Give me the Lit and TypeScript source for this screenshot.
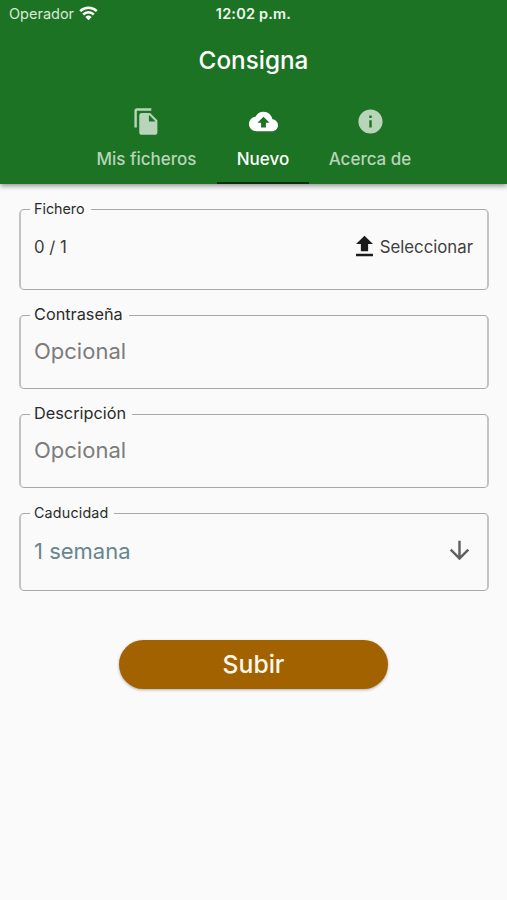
import { LitElement, html, css, svg } from "lit";
import { customElement, property } from "lit/decorators.js";

const ICONS: Record<string, string> = {
  copy: "M16 1H4c-1.1 0-2 .9-2 2v14h2V3h12V1zm-1 4l6 6v10c0 1.1-.9 2-2 2H7.99C6.89 23 6 22.1 6 21l.01-14c0-1.1.89-2 1.99-2h7zm-1 7h5.5L14 6.5V12z",
  cloud: "M19.35 10.04C18.67 6.59 15.64 4 12 4 9.11 4 6.6 5.64 5.35 8.04 2.34 8.36 0 10.91 0 14c0 3.31 2.69 6 6 6h13c2.76 0 5-2.24 5-5 0-2.64-2.05-4.78-4.65-4.96zM14 13v4h-4v-4H7l5-5 5 5h-3z",
  info: "M12 2C6.48 2 2 6.48 2 12s4.48 10 10 10 10-4.48 10-10S17.52 2 12 2zm1 15h-2v-6h2v6zm0-8h-2V7h2v2z",
  upload: "M9 16h6v-6h4l-7-7-7 7h4v6zm-4 2h14v2H5v-2z",
  down: "M20 12l-1.41-1.41L13 16.17V4h-2v12.17l-5.58-5.59L4 12l8 8 8-8z",
};

@customElement("app-icon")
class AppIcon extends LitElement {
  @property() name = "";
  static styles = css`
    :host { display: inline-flex; flex: none; width: 29px; height: 29px; }
    svg { width: 100%; height: 100%; fill: currentColor; }
  `;
  render() {
    return html`<svg viewBox="0 0 24 24">${svg`<path d=${ICONS[this.name]}></path>`}</svg>`;
  }
}

@customElement("form-field")
class FormField extends LitElement {
  @property() label = "";
  static styles = css`
    :host { display: block; }
    fieldset {
      box-sizing: border-box;
      height: 100%;
      min-width: 0;
      margin: 0;
      padding: 0 14px 0 9px;
      border-style: solid;
      border-width: 1px 2px;
      border-color: #a8a8a8 #c2c2c2;
      border-radius: 5px;
    }
    legend {
      height: 17px;
      line-height: 15px;
      padding: 0 6px 0 4px;
      font-size: var(--label-size, 16.3px);
      letter-spacing: var(--label-spacing, 0);
      color: #2b2b2b;
    }
    .body { display: flex; align-items: center; padding-left: 4px; height: var(--body-height, 54px); }
  `;
  render() {
    return html`<fieldset>
      <legend>${this.label}</legend>
      <div class="body"><slot></slot></div>
    </fieldset>`;
  }
}

@customElement("app-root")
class AppRoot extends LitElement {
  static styles = css`
    :host {
      display: flex;
      flex-direction: column;
      height: 900px;
      background: #fafafa;
      font-family: Inter, "Liberation Sans", sans-serif;
      overflow: hidden;
    }
    header { height: 184px; flex: none; display: flex; flex-direction: column; background: #1d7324; color: #fff; box-shadow: 0 2px 5px rgba(0, 0, 0, 0.42); }
    .status { display: grid; grid-template-columns: 1fr auto 1fr; height: 28px; align-items: center; padding: 0 9px; }
    .carrier { display: flex; align-items: center; gap: 5px; font-size: 14.5px; color: #d8ead6; }
    .carrier span { line-height: 16px; margin-top: -1px; }
    .wifi { width: 19px; height: 15px; margin-top: -2px; fill: none; stroke: #fff; stroke-width: 2.5; }
    .wifi .dot { fill: #fff; stroke: none; }
    .clock { line-height: 16px; margin-top: -1px; font-size: 14.5px; font-weight: 600; letter-spacing: 0.2px; color: #eef8ed; }
    h1 { margin: 0; height: 64px; line-height: 64px; text-align: center; font-size: 24.3px; font-weight: 500; }
    nav { display: flex; justify-content: center; flex: 1; }
    .tab { box-sizing: border-box; display: flex; flex-direction: column; align-items: center; padding: 15px 0 0; color: #b8d5b9; font-size: 17px; font-weight: 500; border-bottom: 2px solid transparent; }
    .tab span { line-height: 20px; margin-top: 13px; white-space: nowrap; }
    .t1 { width: 141px; }
    .t2 { width: 92px; }
    .t3 { width: 122px; }
    .active { color: #fff; border-bottom-color: #0b2e10; }
    main { display: flex; flex-direction: column; padding: 17px 18px 0 19px; }
    .file { height: 89px; --label-size: 14.3px; --body-height: 56px; }
    .text { height: 82px; margin-top: 17px; }
    .exp { height: 86px; margin-top: 17px; --label-size: 14.3px; --label-spacing: 0.18px; --body-height: 58px; }
    .count { padding-top: 2px; font-size: 16.8px; color: #3b3b3b; }
    .select { display: flex; align-items: center; gap: 1px; margin-left: auto; font-size: 16.8px; color: #404040; }
    .select span { padding-top: 2px; }
    .select app-icon { color: #1b1b1b; }
    .hint { font-size: 22px; color: #7c7c7c; }
    .value { font-size: 22px; color: #68868f; }
    .arrow { margin: -2px -1px 0 auto; color: #5f5f5f; }
    button { width: 269px; height: 49px; margin: 49px auto 0 100px; padding: 0 0 2px; border: 0; border-radius: 25px; background: #a36200; color: #fff8ea; font: 500 24.7px Inter, sans-serif; box-shadow: 0 1px 3px rgba(0, 0, 0, 0.3); }
  `;
  render() {
    return html`
      <header>
        <div class="status">
          <div class="carrier">
            <span>Operador</span>
            <svg class="wifi" viewBox="0 0 19 15">
              <path d="M1.2 5.2a12 12 0 0 1 16.6 0M4.2 8.5a7.6 7.6 0 0 1 10.6 0"></path>
              <path class="dot" d="M9.5 14.2 6.4 11a4.5 4.5 0 0 1 6.2 0z"></path>
            </svg>
          </div>
          <div class="clock">12:02 p.m.</div>
        </div>
        <h1>Consigna</h1>
        <nav>
          <div class="tab t1"><app-icon name="copy"></app-icon><span>Mis ficheros</span></div>
          <div class="tab t2 active"><app-icon name="cloud"></app-icon><span>Nuevo</span></div>
          <div class="tab t3"><app-icon name="info"></app-icon><span>Acerca de</span></div>
        </nav>
      </header>
      <main>
        <form-field class="file" label="Fichero">
          <span class="count">0 / 1</span>
          <span class="select"><app-icon name="upload"></app-icon><span>Seleccionar</span></span>
        </form-field>
        <form-field class="text" label="Contraseña"><span class="hint">Opcional</span></form-field>
        <form-field class="text" label="Descripción"><span class="hint">Opcional</span></form-field>
        <form-field class="exp" label="Caducidad">
          <span class="value">1 semana</span>
          <app-icon class="arrow" name="down"></app-icon>
        </form-field>
        <button>Subir</button>
      </main>
    `;
  }
}
